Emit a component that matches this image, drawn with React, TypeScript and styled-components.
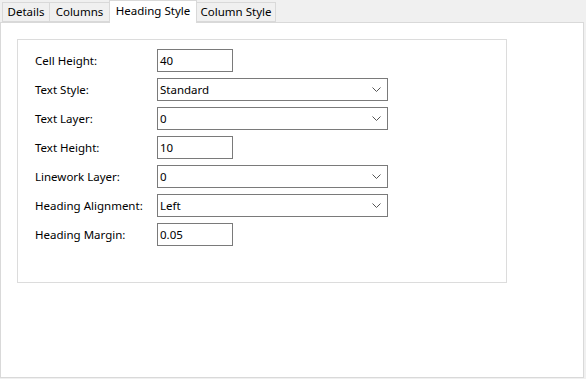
import React from 'react'
import styled, { createGlobalStyle } from 'styled-components'

const Global = createGlobalStyle`
  html, body {
    margin: 0;
    padding: 0;
    background: #f0f0f0;
    font-family: "Noto Sans", "Open Sans", sans-serif;
    font-size: 11.5px;
    color: #000;
  }
`

const Window = styled.div`
  width: 586px;
  height: 379px;
  background: #f0f0f0;
  display: flex;
  flex-direction: column;
`
const TabStrip = styled.div`
  display: flex;
  align-items: flex-end;
  height: 22px;
  padding-left: 3px;
  position: relative;
  z-index: 1;
`
const Tab = styled.div<{ $active?: boolean; $w: number }>`
  box-sizing: border-box;
  width: ${p => p.$w}px;
  height: ${p => (p.$active ? '23px' : '20px')};
  margin-bottom: ${p => (p.$active ? '-1px' : '0')};
  padding-bottom: ${p => (p.$active ? '3px' : '0')};
  display: flex;
  align-items: center;
  justify-content: center;
  background: ${p => (p.$active ? '#ffffff' : '#f0f0f0')};
  border: 1px solid #d9d9d9;
  border-bottom: ${p => (p.$active ? 'none' : '1px solid #d9d9d9')};
  margin-left: -1px;
  white-space: nowrap;
  line-height: 1;
`
const Panel = styled.div`
  box-sizing: border-box;
  width: 584px;
  height: 356px;
  background: #ffffff;
  border: 1px solid #d9d9d9;
  padding: 16px 0 0 16px;
`
const GroupBox = styled.div`
  box-sizing: border-box;
  width: 490px;
  height: 244px;
  border: 1px solid #dcdcdc;
  padding: 9px 0 0 17px;
  display: grid;
  grid-template-columns: 122px auto;
  grid-auto-rows: 23px;
  row-gap: 6px;
  align-content: start;
`
const Label = styled.div`
  display: flex;
  align-items: center;
  white-space: nowrap;
`
const Field = styled.div<{ $wide?: boolean }>`
  box-sizing: border-box;
  width: ${p => (p.$wide ? '231px' : '76px')};
  height: 23px;
  border: 1px solid #7a7a7a;
  background: #fff;
  display: flex;
  align-items: center;
  justify-content: space-between;
  padding: 0 6px 0 2px;
`
const Chevron = styled.svg`
  width: 9px;
  height: 5px;
  display: block;
`

const tabs = [
  { name: 'Details', w: 48 },
  { name: 'Columns', w: 61 },
  { name: 'Heading Style', w: 88, active: true },
  { name: 'Column Style', w: 80 },
]

const rows: { label: string; value: string; combo?: boolean }[] = [
  { label: 'Cell Height:', value: '40' },
  { label: 'Text Style:', value: 'Standard', combo: true },
  { label: 'Text Layer:', value: '0', combo: true },
  { label: 'Text Height:', value: '10' },
  { label: 'Linework Layer:', value: '0', combo: true },
  { label: 'Heading Alignment:', value: 'Left', combo: true },
  { label: 'Heading Margin:', value: '0.05' },
]

export default function App() {
  return (
    <Window>
      <Global />
      <TabStrip>
        {tabs.map(t => (
          <Tab key={t.name} $w={t.w} $active={t.active}>
            {t.name}
          </Tab>
        ))}
      </TabStrip>
      <Panel>
        <GroupBox>
          {rows.map(r => (
            <React.Fragment key={r.label}>
              <Label>{r.label}</Label>
              <Field $wide={r.combo}>
                <span>{r.value}</span>
                {r.combo && (
                  <Chevron viewBox="0 0 9 5">
                    <path d="M0.5 0.5 L4.5 4.5 L8.5 0.5" fill="none" stroke="#555" strokeWidth="1" />
                  </Chevron>
                )}
              </Field>
            </React.Fragment>
          ))}
        </GroupBox>
      </Panel>
    </Window>
  )
}
